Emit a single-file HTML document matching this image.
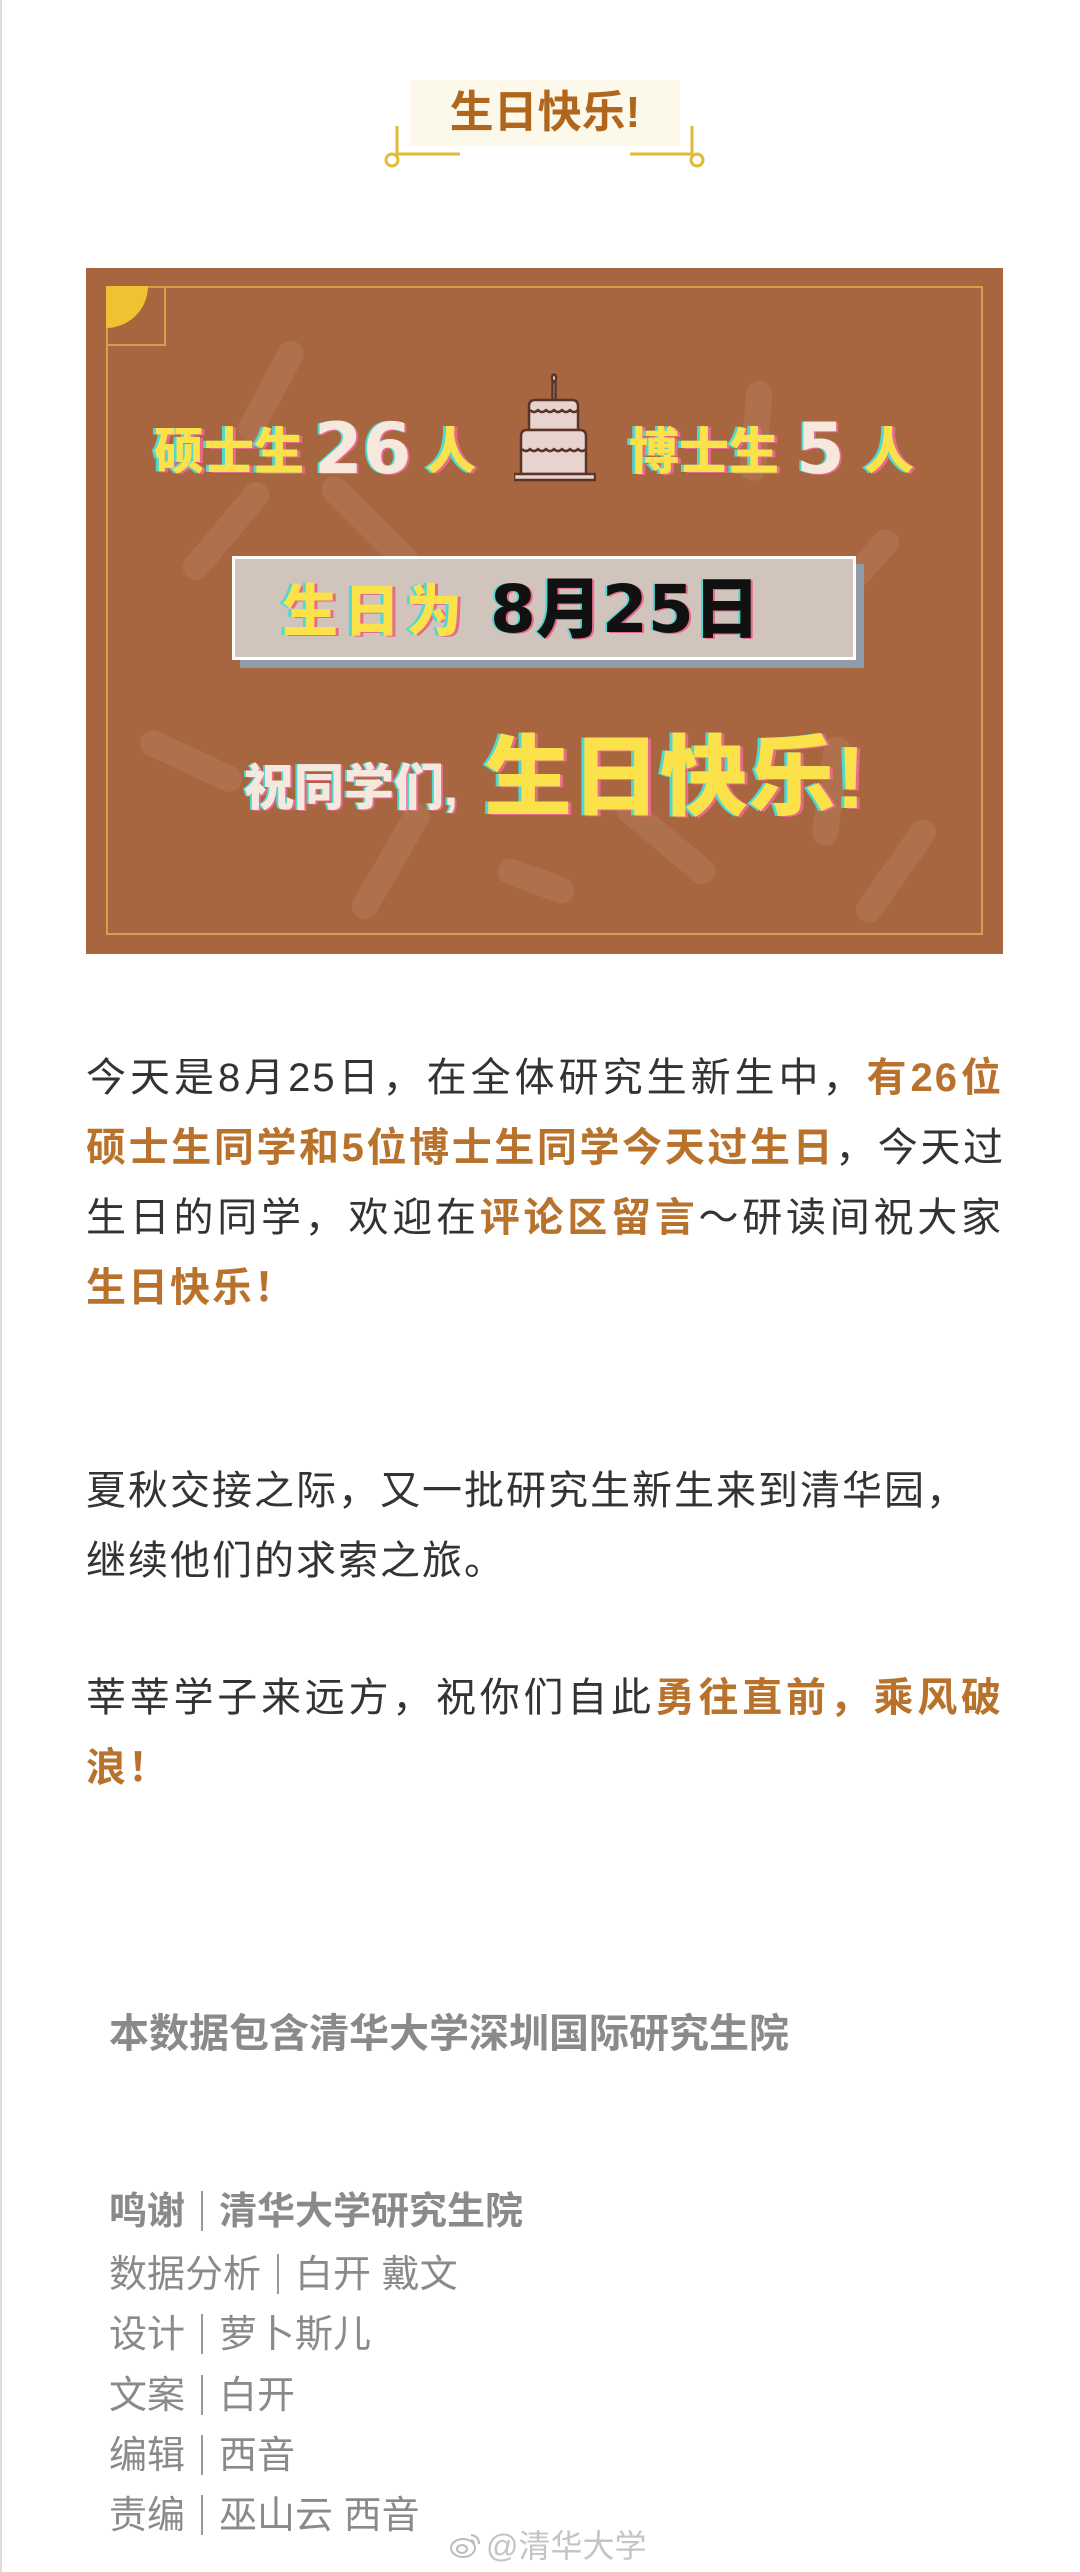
<!DOCTYPE html>
<html><head><meta charset="utf-8">
<style>
*{margin:0;padding:0;box-sizing:border-box}
html,body{width:1080px;height:2572px;background:#fff;overflow:hidden}
body{position:relative;font-family:"Liberation Sans","Noto Sans CJK SC",sans-serif;border-left:2px solid #ddd}
.abs{position:absolute;white-space:nowrap}
.card{position:absolute;left:84px;top:268px;width:917px;height:686px;background:#a86640;overflow:hidden}
.inner{position:absolute;left:20px;top:18px;right:20px;bottom:19px;border:2px solid #d2a049}
.bar{position:absolute;height:26px;border-radius:13px;background:rgba(255,235,215,0.09)}
.y{color:#fbe14a;font-weight:900;text-shadow:-3px 0 #4fd8d0,3px 1px #e86a8a}
.c{color:#f6e8dc;font-weight:900;text-shadow:-2px 0 #4fd8d0,2px 1px #e86a8a}
.p{position:absolute;left:84px;width:917px;font-size:40px;color:#333;letter-spacing:2px;height:70px;line-height:70px;white-space:nowrap}
.j{text-align:justify;text-align-last:justify}
.h{color:#b8722c;font-weight:bold}
.g{position:absolute;left:107px;color:#8a8a8a;font-size:38px;white-space:nowrap;line-height:60px}
.sep{display:inline-block;width:2px;height:40px;background:#999;vertical-align:-7px;margin:0 16px}
</style></head><body>

<div class="abs" style="left:408px;top:80px;width:270px;height:66px;background:#fcf8ea"></div>
<div class="abs" style="left:408px;top:86px;width:270px;text-align:center;font-size:44px;font-weight:bold;color:#b0661c;line-height:54px">生日快乐!</div>
<svg class="abs" style="left:380px;top:120px" width="330" height="60">
 <g stroke="#e2bb36" stroke-width="3" fill="none">
  <line x1="15" y1="6" x2="15" y2="36"/><circle cx="10" cy="40" r="6"/><line x1="15" y1="34" x2="78" y2="34"/>
  <line x1="310" y1="6" x2="310" y2="36"/><circle cx="315" cy="40" r="6"/><line x1="248" y1="34" x2="310" y2="34"/>
 </g>
</svg>

<div class="card">
 <div class="bar" style="left:130px;top:110px;width:110px;transform:rotate(-62deg)"></div>
 <div class="bar" style="left:620px;top:150px;width:100px;transform:rotate(-85deg)"></div>
 <div class="bar" style="left:80px;top:250px;width:120px;transform:rotate(-50deg)"></div>
 <div class="bar" style="left:210px;top:270px;width:200px;transform:rotate(45deg)"></div>
 <div class="bar" style="left:700px;top:300px;width:130px;transform:rotate(-48deg)"></div>
 <div class="bar" style="left:50px;top:480px;width:110px;transform:rotate(25deg)"></div>
 <div class="bar" style="left:690px;top:510px;width:110px;transform:rotate(-82deg)"></div>
 <div class="bar" style="left:240px;top:580px;width:130px;transform:rotate(-60deg)"></div>
 <div class="bar" style="left:410px;top:600px;width:80px;transform:rotate(20deg)"></div>
 <div class="bar" style="left:750px;top:590px;width:120px;transform:rotate(-55deg)"></div>
 <div class="bar" style="left:520px;top:560px;width:120px;transform:rotate(40deg)"></div>
 <div class="inner"></div>
 <div class="abs" style="left:20px;top:18px;width:60px;height:60px;border-right:2px solid #d2a049;border-bottom:2px solid #d2a049"></div>
 <div class="abs" style="left:20px;top:18px;width:42px;height:42px;background:#eec232;border-bottom-right-radius:42px"></div>

 <div class="abs y" style="left:68px;top:156px;font-size:50px;line-height:56px">硕士生</div>
 <div class="abs c" style="left:228px;top:146px;font-size:70px;line-height:70px;font-family:'DejaVu Sans',sans-serif;font-weight:bold">26</div>
 <div class="abs y" style="left:340px;top:156px;font-size:50px;line-height:56px">人</div>
 <svg class="abs" style="left:428px;top:104px" width="82" height="112" viewBox="29 12 82 108">
  <g stroke="#5a3426" stroke-width="2.5" fill="#e8d3cf" stroke-linejoin="round">
   <rect x="67.5" y="20" width="3" height="18" fill="#e8d3cf"/>
   <ellipse cx="69" cy="16" rx="2" ry="3.5" fill="#fff"/>
   <path d="M44 68 V44 Q44 38 50 38 H87 Q93 38 93 44 V68 Z"/>
   <path d="M36 112 V74 Q36 68 42 68 H95 Q101 68 101 74 V112 Z"/>
   <rect x="29" y="112" width="81" height="6"/>
   <path d="M45 48 q4 4 8 0 q4 4 8 0 q4 4 8 0 q4 4 8 0 q4 4 8 0 q4 4 8 0" fill="none"/>
   <path d="M37 87 q4 4 8 0 q4 4 8 0 q4 4 8 0 q4 4 8 0 q4 4 8 0 q4 4 8 0 q4 4 8 0 q4 4 8 0" fill="none"/>
  </g>
 </svg>
 <div class="abs y" style="left:543px;top:156px;font-size:50px;line-height:56px">博士生</div>
 <div class="abs c" style="left:710px;top:146px;font-size:70px;line-height:70px;font-family:'DejaVu Sans',sans-serif;font-weight:bold">5</div>
 <div class="abs y" style="left:778px;top:156px;font-size:50px;line-height:56px">人</div>

 <div class="abs" style="left:154px;top:296px;width:624px;height:104px;background:#8f9bab"></div>
 <div class="abs" style="left:146px;top:288px;width:624px;height:104px;background:#d1c4bd;border:3px solid #fff"></div>
 <div class="abs y" style="left:196px;top:312px;font-size:56px;line-height:64px;letter-spacing:6px">生日为</div>
 <div class="abs" style="left:404px;top:304px;font-size:66px;line-height:76px;font-weight:900;color:#111;text-shadow:-2px 0 #4fd8d0,2px 1px #e86a8a;font-family:'DejaVu Sans','Noto Sans CJK SC',sans-serif">8月25日</div>

 <div class="abs c" style="left:158px;top:492px;font-size:50px;line-height:56px">祝同学们,</div>
 <div class="abs y" style="left:398px;top:462px;font-size:88px;line-height:96px">生日快乐!</div>
</div>

<div class="p j" style="top:1043px">今天是8月25日，在全体研究生新生中，<span class="h">有26位</span></div>
<div class="p j" style="top:1113px;letter-spacing:0"><span class="h">硕士生同学和5位博士生同学今天过生日</span>，今天过</div>
<div class="p j" style="top:1183px">生日的同学，欢迎在<span class="h">评论区留言</span>～研读间祝大家</div>
<div class="p" style="top:1253px"><span class="h">生日快乐！</span></div>

<div class="p" style="top:1456px">夏秋交接之际，又一批研究生新生来到清华园，</div>
<div class="p" style="top:1526px">继续他们的求索之旅。</div>

<div class="p j" style="top:1663px">莘莘学子来远方，祝你们自此<span class="h">勇往直前，乘风破</span></div>
<div class="p" style="top:1733px"><span class="h">浪！</span></div>

<div class="g" style="top:2004px;font-weight:bold;font-size:40px;letter-spacing:0">本数据包含清华大学深圳国际研究生院</div>
<div class="g" style="top:2182px;font-weight:bold">鸣谢<span class="sep"></span>清华大学研究生院</div>
<div class="g" style="top:2245px">数据分析<span class="sep"></span>白开 戴文</div>
<div class="g" style="top:2305px">设计<span class="sep"></span>萝卜斯儿</div>
<div class="g" style="top:2366px">文案<span class="sep"></span>白开</div>
<div class="g" style="top:2426px">编辑<span class="sep"></span>西音</div>
<div class="g" style="top:2486px">责编<span class="sep"></span>巫山云 西音</div>

<svg class="abs" style="left:447px;top:2530px" width="34" height="30" viewBox="0 0 34 30"><g fill="none" stroke="#bbb" stroke-width="2"><ellipse cx="14" cy="18" rx="12" ry="9"/><ellipse cx="13" cy="19" rx="5" ry="4"/><path d="M22 5 q8 1 8 9"/><path d="M22 10 q3 1 3 4"/></g></svg>
<div class="abs" style="left:484px;top:2526px;font-size:32px;color:#c4c4c4;line-height:40px">@清华大学</div>
</body></html>
